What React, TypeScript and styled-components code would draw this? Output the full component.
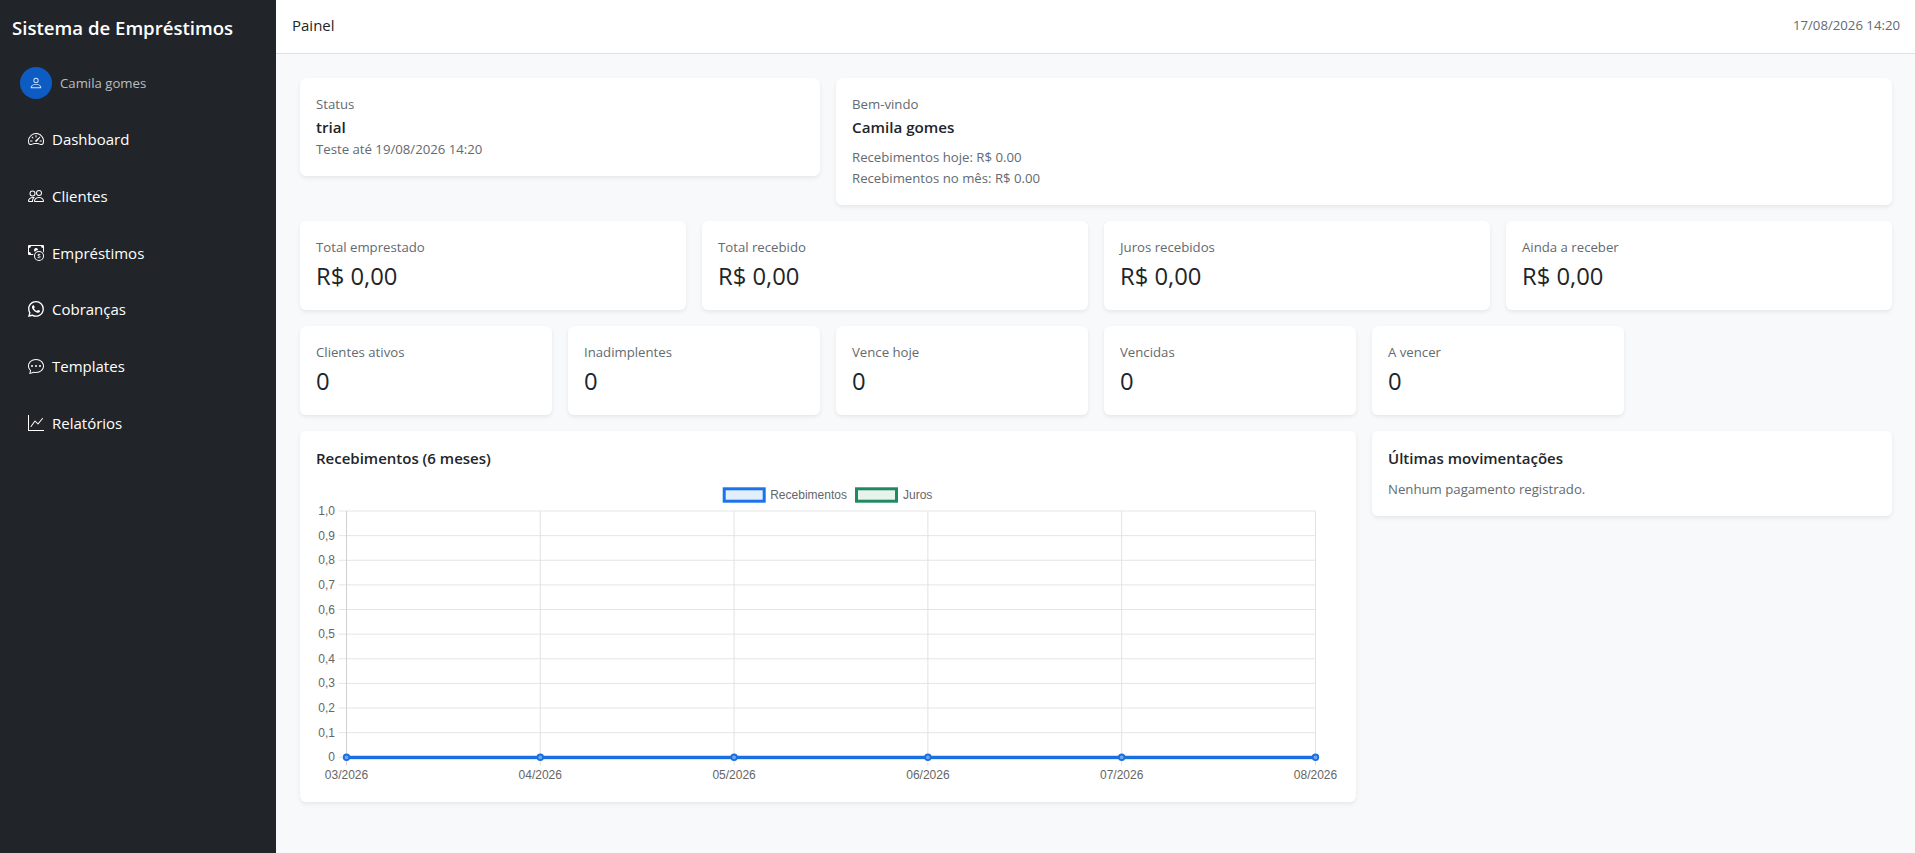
import React from 'react'
import styled, { createGlobalStyle } from 'styled-components'
import { BsCashCoin, BsChatDots, BsGraphUp, BsPeople, BsPerson, BsSpeedometer2, BsWhatsapp } from 'react-icons/bs'

const UI_FONT = '"Open Sans", "Noto Sans", sans-serif'

const GlobalStyle = createGlobalStyle`
    html, body {
        margin: 0;
        padding: 0;
        background: #f8f9fa;
    }

    * {
        box-sizing: border-box;
    }

    body {
        font-family: ${UI_FONT};
        color: #212529;
    }
`

const Shell = styled.div`
    display: grid;
    grid-template-columns: 276px 1fr;
    min-height: 853px;
`

const Sidebar = styled.aside`
    background: #212529;
    color: #fff;
    padding: 15px 12px 16px;
`

const Brand = styled.div`
    font-size: 18.6px;
    font-weight: 600;
    line-height: 26px;
    margin-bottom: 26px;
`

const UserRow = styled.div`
    display: flex;
    align-items: center;
    gap: 8px;
    padding: 0 8px;
    margin-bottom: 12px;
`

const Avatar = styled.div`
    width: 32px;
    height: 32px;
    border-radius: 50%;
    background: #0d5cc4;
    display: flex;
    align-items: center;
    justify-content: center;
    font-size: 14px;
    color: #d6e4f7;
`

const UserName = styled.span`
    font-size: 13.2px;
    color: rgba(255, 255, 255, 0.7);
`

const Nav = styled.nav`
    display: flex;
    flex-direction: column;
`

const NavItem = styled.a`
    display: flex;
    align-items: center;
    gap: 8px;
    height: 56.67px;
    padding: 0 16px;
    color: #fff;
    font-size: 15px;
`

const Main = styled.main`
    min-width: 0;
`

const Topbar = styled.header`
    height: 54px;
    background: #fff;
    border-bottom: 1px solid #dee2e6;
    display: flex;
    align-items: center;
    justify-content: space-between;
    padding: 0 15px 3px 16px;
`

const PageTitle = styled.div`
    font-size: 15px;
    font-weight: 500;
`

const Clock = styled.div`
    font-size: 13.2px;
    color: #636a70;
`

const Content = styled.div`
    padding: 24px 23px 24px 24px;
    display: grid;
    grid-template-columns: repeat(12, 1fr);
    gap: 16px;
    align-items: start;
`

type CardProps = {
    $span: number,
}

const Card = styled.section<CardProps>`
    grid-column: span ${({ $span }) => $span};
    background: #fff;
    border-radius: 6px;
    padding: 16px;
    box-shadow: 0 2px 4px rgba(0, 0, 0, 0.075);
`

const Muted = styled.div`
    font-size: 13.2px;
    line-height: 21px;
    color: #636a70;
`

const Strong = styled.div`
    font-size: 15.2px;
    font-weight: 600;
    line-height: 24px;
`

const Stack = styled.div`
    margin-top: 8px;
`

const Value = styled.div`
    font-size: 23.8px;
    font-weight: 500;
    line-height: 36px;
`

const CardTitle = styled.h2`
    margin: 0 0 9px;
    font-size: 15px;
    font-weight: 600;
    line-height: 23px;
`

const ChartSvg = styled.svg`
    display: block;
    width: 1023px;
    height: 307px;
    font-family: "Liberation Sans", Arial, sans-serif;
    font-size: 12px;
`

const Y_LABELS = ['1,0', '0,9', '0,8', '0,7', '0,6', '0,5', '0,4', '0,3', '0,2', '0,1', '0']
const X_LABELS = ['03/2026', '04/2026', '05/2026', '06/2026', '07/2026', '08/2026']
const CHART_LEFT = 30.5
const CHART_TOP = 32
const X_STEP = 193.8
const Y_STEP = 24.63
const CHART_RIGHT = CHART_LEFT + X_STEP * 5
const CHART_BOTTOM = CHART_TOP + Y_STEP * 10

const Chart = () => (
    <ChartSvg viewBox="0 0 1023 307">
        {Y_LABELS.map((label, i) => {
            const y = CHART_TOP + i * Y_STEP
            return (
                <g key={label}>
                    <line x1={CHART_LEFT - 8} x2={CHART_RIGHT} y1={y} y2={y} stroke="#e5e5e5" />
                    <text x={CHART_LEFT - 11.5} y={y + 4} fill="#666" textAnchor="end">{label}</text>
                </g>
            )
        })}
        {X_LABELS.map((label, i) => {
            const x = CHART_LEFT + i * X_STEP
            return (
                <g key={label}>
                    <line x1={x} x2={x} y1={CHART_TOP} y2={CHART_BOTTOM + 8} stroke={i === 0 ? '#cfcfcf' : '#e2e2e2'} />
                    <text x={x} y={CHART_BOTTOM + 21.5} fill="#666" textAnchor="middle">{label}</text>
                </g>
            )
        })}
        <rect x={408.2} y={9.8} width={40} height={12.4} fill="#e3eefd" stroke="#1a73e8" strokeWidth={3} />
        <text x={454.2} y={19.5} fill="#666">Recebimentos</text>
        <rect x={540.5} y={9.8} width={40} height={12.4} fill="#e8f3ee" stroke="#1f8a5f" strokeWidth={3} />
        <text x={587} y={19.5} fill="#666">Juros</text>
        <line x1={CHART_LEFT} x2={CHART_RIGHT} y1={CHART_BOTTOM + 1} y2={CHART_BOTTOM + 1} stroke="#bfe3ff" strokeWidth={3} />
        <line x1={CHART_LEFT} x2={CHART_RIGHT} y1={CHART_BOTTOM} y2={CHART_BOTTOM} stroke="#1a6fe0" strokeWidth={3.2} />
        {X_LABELS.map((label, i) => (
            <circle key={label} cx={CHART_LEFT + i * X_STEP} cy={CHART_BOTTOM} r={2.8} fill="#6ea6ec" stroke="#1a6fe0" strokeWidth={1.8} />
        ))}
    </ChartSvg>
)

const NAV_ITEMS = [
    { label: 'Dashboard', icon: <BsSpeedometer2 size={16} /> },
    { label: 'Clientes', icon: <BsPeople size={16} /> },
    { label: 'Empréstimos', icon: <BsCashCoin size={16} /> },
    { label: 'Cobranças', icon: <BsWhatsapp size={16} /> },
    { label: 'Templates', icon: <BsChatDots size={16} /> },
    { label: 'Relatórios', icon: <BsGraphUp size={16} /> },
]

const TOTALS = ['Total emprestado', 'Total recebido', 'Juros recebidos', 'Ainda a receber']
const COUNTS = ['Clientes ativos', 'Inadimplentes', 'Vence hoje', 'Vencidas', 'A vencer']

const App = () => (
    <Shell>
        <GlobalStyle />
        <Sidebar>
            <Brand>Sistema de Empréstimos</Brand>
            <UserRow>
                <Avatar><BsPerson /></Avatar>
                <UserName>Camila gomes</UserName>
            </UserRow>
            <Nav>
                {NAV_ITEMS.map(({ label, icon }) => (
                    <NavItem key={label}>{icon}{label}</NavItem>
                ))}
            </Nav>
        </Sidebar>
        <Main>
            <Topbar>
                <PageTitle>Painel</PageTitle>
                <Clock>17/08/2026 14:20</Clock>
            </Topbar>
            <Content>
                <Card $span={4}>
                    <Muted>Status</Muted>
                    <Strong>trial</Strong>
                    <Muted>Teste até 19/08/2026 14:20</Muted>
                </Card>
                <Card $span={8}>
                    <Muted>Bem-vindo</Muted>
                    <Strong>Camila gomes</Strong>
                    <Stack>
                        <Muted>Recebimentos hoje: R$ 0.00</Muted>
                        <Muted>Recebimentos no mês: R$ 0.00</Muted>
                    </Stack>
                </Card>
                {TOTALS.map((label) => (
                    <Card key={label} $span={3}>
                        <Muted>{label}</Muted>
                        <Value>R$ 0,00</Value>
                    </Card>
                ))}
                {COUNTS.map((label) => (
                    <Card key={label} $span={2}>
                        <Muted>{label}</Muted>
                        <Value>0</Value>
                    </Card>
                ))}
                <Card $span={8}>
                    <CardTitle>Recebimentos (6 meses)</CardTitle>
                    <Chart />
                </Card>
                <Card $span={4}>
                    <CardTitle>Últimas movimentações</CardTitle>
                    <Muted>Nenhum pagamento registrado.</Muted>
                </Card>
            </Content>
        </Main>
    </Shell>
)

export default App
